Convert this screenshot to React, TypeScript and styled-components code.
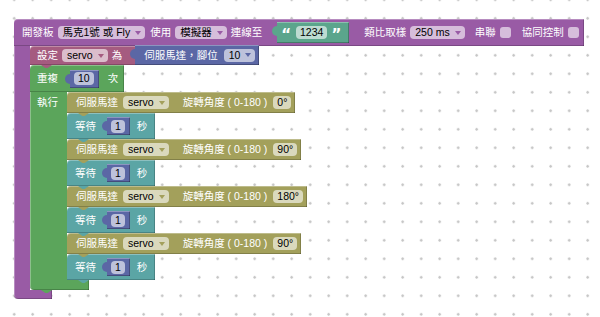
import styled, { createGlobalStyle } from 'styled-components';

// blockly-ish hues (hsv s=.45 v=.65)
const C = {
  purple: '#995ba5',
  rasp: '#a55b80',
  indigo: '#5b67a5',
  green: '#5ba55b',
  olive: '#a3a05b',
  teal: '#5ba5a5',
  text: '#5ba58c',
};

const GlobalStyle = createGlobalStyle`
  html, body { margin: 0; padding: 0; background: #fff; }
  #root { width: 600px; height: 317px; }
`;

const Workspace = styled.div`
  box-sizing: border-box;
  width: 600px;
  height: 317px;
  padding: 19px 0 0 14px;
  overflow: hidden;
  background-color: #fff;
  background-image: radial-gradient(circle, #c4c4c4 0 1px, transparent 1.5px);
  background-size: 18.5px 18.5px;
  background-position: 4.95px 9.05px;
  font-family: "Liberation Sans", "Noto Sans CJK TC", sans-serif;
  font-size: 10.5px;
  line-height: 1;
  color: #fff;
`;

const CBlock = styled.div`
  display: flex;
  flex-direction: column;
  align-items: flex-start;
`;

const Row = styled.div<{ $c: string; $h: number; $pl?: number; $pr?: number; $tab?: boolean }>`
  position: relative;
  box-sizing: border-box;
  display: flex;
  align-items: center;
  height: ${p => p.$h}px;
  padding: 0 ${p => p.$pr ?? 6}px 0 ${p => p.$pl ?? 8}px;
  background: ${p => p.$c};
  border-radius: 4px 0 0 0;
  white-space: nowrap;
  box-shadow: inset 0 1px 0 rgba(255, 255, 255, 0.3), inset 0 -1px 0 rgba(0, 0, 0, 0.2),
    inset -1px 0 0 rgba(0, 0, 0, 0.2);

  &::after {
    content: ${p => (p.$tab ? "''" : 'none')};
    position: absolute;
    left: 11px;
    bottom: -3px;
    width: 11px;
    height: 3px;
    background: ${p => p.$c};
    clip-path: polygon(0 0, 100% 0, 60% 100%, 40% 100%);
    z-index: 2;
  }
`;

const Body = styled.div`
  display: flex;
  align-items: stretch;
`;

const Arm = styled.div<{ $c: string; $w: number }>`
  flex: none;
  box-sizing: border-box;
  width: ${p => p.$w}px;
  padding-left: 7px;
  background: ${p => p.$c};
  box-shadow: inset 1px 0 0 rgba(255, 255, 255, 0.3);
`;

const ArmLabel = styled.div`
  height: 21px;
  display: flex;
  align-items: center;
`;

const Stack = styled.div`
  display: flex;
  flex-direction: column;
  align-items: flex-start;
`;

const Foot = styled.div<{ $c: string; $w: number; $h: number; $tab?: boolean }>`
  position: relative;
  width: ${p => p.$w}px;
  height: ${p => p.$h}px;
  background: ${p => p.$c};
  border-radius: 0 0 0 4px;
  box-shadow: inset 0 -1px 0 rgba(0, 0, 0, 0.2), inset -1px 0 0 rgba(0, 0, 0, 0.2),
    inset 1px 0 0 rgba(255, 255, 255, 0.3);

  &::after {
    content: ${p => (p.$tab ? "''" : 'none')};
    position: absolute;
    left: 11px;
    bottom: -3px;
    width: 11px;
    height: 3px;
    background: ${p => p.$c};
    clip-path: polygon(0 0, 100% 0, 60% 100%, 40% 100%);
    z-index: 2;
  }
`;

const Value = styled.div<{ $c: string; $h: number; $ml?: number; $pl?: number; $pr?: number; $end?: boolean }>`
  position: relative;
  box-sizing: border-box;
  display: flex;
  align-items: center;
  flex: none;
  align-self: ${p => (p.$end ? 'flex-end' : 'center')};
  height: ${p => p.$h}px;
  margin-left: ${p => p.$ml ?? 0}px;
  padding: 0 ${p => p.$pr ?? 4}px 0 ${p => p.$pl ?? 4}px;
  background: ${p => p.$c};
  box-shadow: inset 0 1px 0 rgba(255, 255, 255, 0.3), inset 0 -1px 0 rgba(0, 0, 0, 0.25),
    inset -1px 0 0 rgba(0, 0, 0, 0.25);

  &::before {
    content: '';
    position: absolute;
    left: -5px;
    top: 4px;
    width: 5px;
    height: 10px;
    background: ${p => p.$c};
    border-radius: 5px 0 0 5px;
  }
`;

const Label = styled.span<{ $ml?: number }>`
  margin-left: ${p => p.$ml ?? 0}px;
  color: #fff;
`;

const Field = styled.span<{ $ml?: number; $pad?: number }>`
  display: inline-flex;
  align-items: center;
  box-sizing: border-box;
  height: 13px;
  margin-left: ${p => p.$ml ?? 0}px;
  padding: 0 ${p => p.$pad ?? 4}px;
  border-radius: 4px;
  background: rgba(255, 255, 255, 0.6);
  color: #000;
`;

const Dropdown = styled(Field)`
  gap: 5px;
  padding: 0 4px 0 5px;
`;

const Arrow = styled.span<{ $c: string }>`
  width: 0;
  height: 0;
  border-left: 3px solid transparent;
  border-right: 3px solid transparent;
  border-top: 4px solid ${p => p.$c};
`;

const Check = styled.span<{ $ml?: number }>`
  width: 11px;
  height: 11px;
  margin-left: ${p => p.$ml ?? 0}px;
  border-radius: 3px;
  background: rgba(255, 255, 255, 0.6);
`;

const Quote = styled.span<{ $ml?: number }>`
  margin-left: ${p => p.$ml ?? 0}px;
  font-family: "DejaVu Sans", sans-serif;
  font-weight: bold;
  font-size: 15px;
  position: relative;
  top: 3px;
`;

const servos = ['0°', '90°', '180°', '90°'];

const Servo = ({ angle }: { angle: string }) => (
  <Row $c={C.olive} $h={21} $pl={9} $pr={4} $tab>
    <Label>伺服馬達</Label>
    <Dropdown $ml={5}>servo<Arrow $c={C.olive} /></Dropdown>
    <Label $ml={14}>旋轉角度 ( 0-180 )</Label>
    <Field $ml={6} $pad={4}>{angle}</Field>
  </Row>
);

const Wait = () => (
  <Row $c={C.teal} $h={26} $pl={8} $pr={8} $tab>
    <Label>等待</Label>
    <Value $c={C.indigo} $h={18} $ml={11} $pl={4} $pr={5}>
      <Field $pad={4}>1</Field>
    </Value>
    <Label $ml={7}>秒</Label>
  </Row>
);

export default function App() {
  return (
    <>
      <GlobalStyle />
      <Workspace>
        <CBlock>
          <Row $c={C.purple} $h={27} $pl={8} $pr={5}>
            <Label>開發板</Label>
            <Dropdown $ml={4}>馬克1號 或 Fly<Arrow $c={C.purple} /></Dropdown>
            <Label $ml={5}>使用</Label>
            <Dropdown $ml={4}>模擬器<Arrow $c={C.purple} /></Dropdown>
            <Label $ml={4}>連線至</Label>
            <Value $c={C.text} $h={21} $ml={15} $pl={4} $pr={8}>
              <Quote>“</Quote>
              <Field $ml={5} $pad={4}>1234</Field>
              <Quote $ml={4}>”</Quote>
            </Value>
            <Label $ml={15}>類比取樣</Label>
            <Dropdown $ml={4}>250 ms<Arrow $c={C.purple} /></Dropdown>
            <Label $ml={10}>串聯</Label>
            <Check $ml={4} />
            <Label $ml={11}>協同控制</Label>
            <Check $ml={4} />
          </Row>
          <Body>
            <Arm $c={C.purple} $w={16} />
            <Stack>
              <Row $c={C.rasp} $h={19} $pl={7} $pr={0} $tab>
                <Label>設定</Label>
                <Dropdown $ml={4}>servo<Arrow $c={C.rasp} /></Dropdown>
                <Label $ml={4}>為</Label>
                <Value $c={C.indigo} $h={20} $ml={13} $pl={9} $pr={4} $end>
                  <Label>伺服馬達，腳位</Label>
                  <Dropdown $ml={6}>10<Arrow $c={C.indigo} /></Dropdown>
                </Value>
              </Row>
              <CBlock>
                <Row $c={C.green} $h={27} $pl={7} $pr={6}>
                  <Label>重複</Label>
                  <Value $c={C.indigo} $h={18} $ml={12} $pl={4} $pr={5}>
                    <Field $pad={4}>10</Field>
                  </Value>
                  <Label $ml={9}>次</Label>
                </Row>
                <Body>
                  <Arm $c={C.green} $w={37}>
                    <ArmLabel>執行</ArmLabel>
                  </Arm>
                  <Stack>
                    {servos.map((a, i) => (
                      <Stack key={i}>
                        <Servo angle={a} />
                        <Wait />
                      </Stack>
                    ))}
                  </Stack>
                </Body>
                <Foot $c={C.green} $w={59} $h={10} $tab />
              </CBlock>
            </Stack>
          </Body>
          <Foot $c={C.purple} $w={38} $h={9} />
        </CBlock>
      </Workspace>
    </>
  );
}
